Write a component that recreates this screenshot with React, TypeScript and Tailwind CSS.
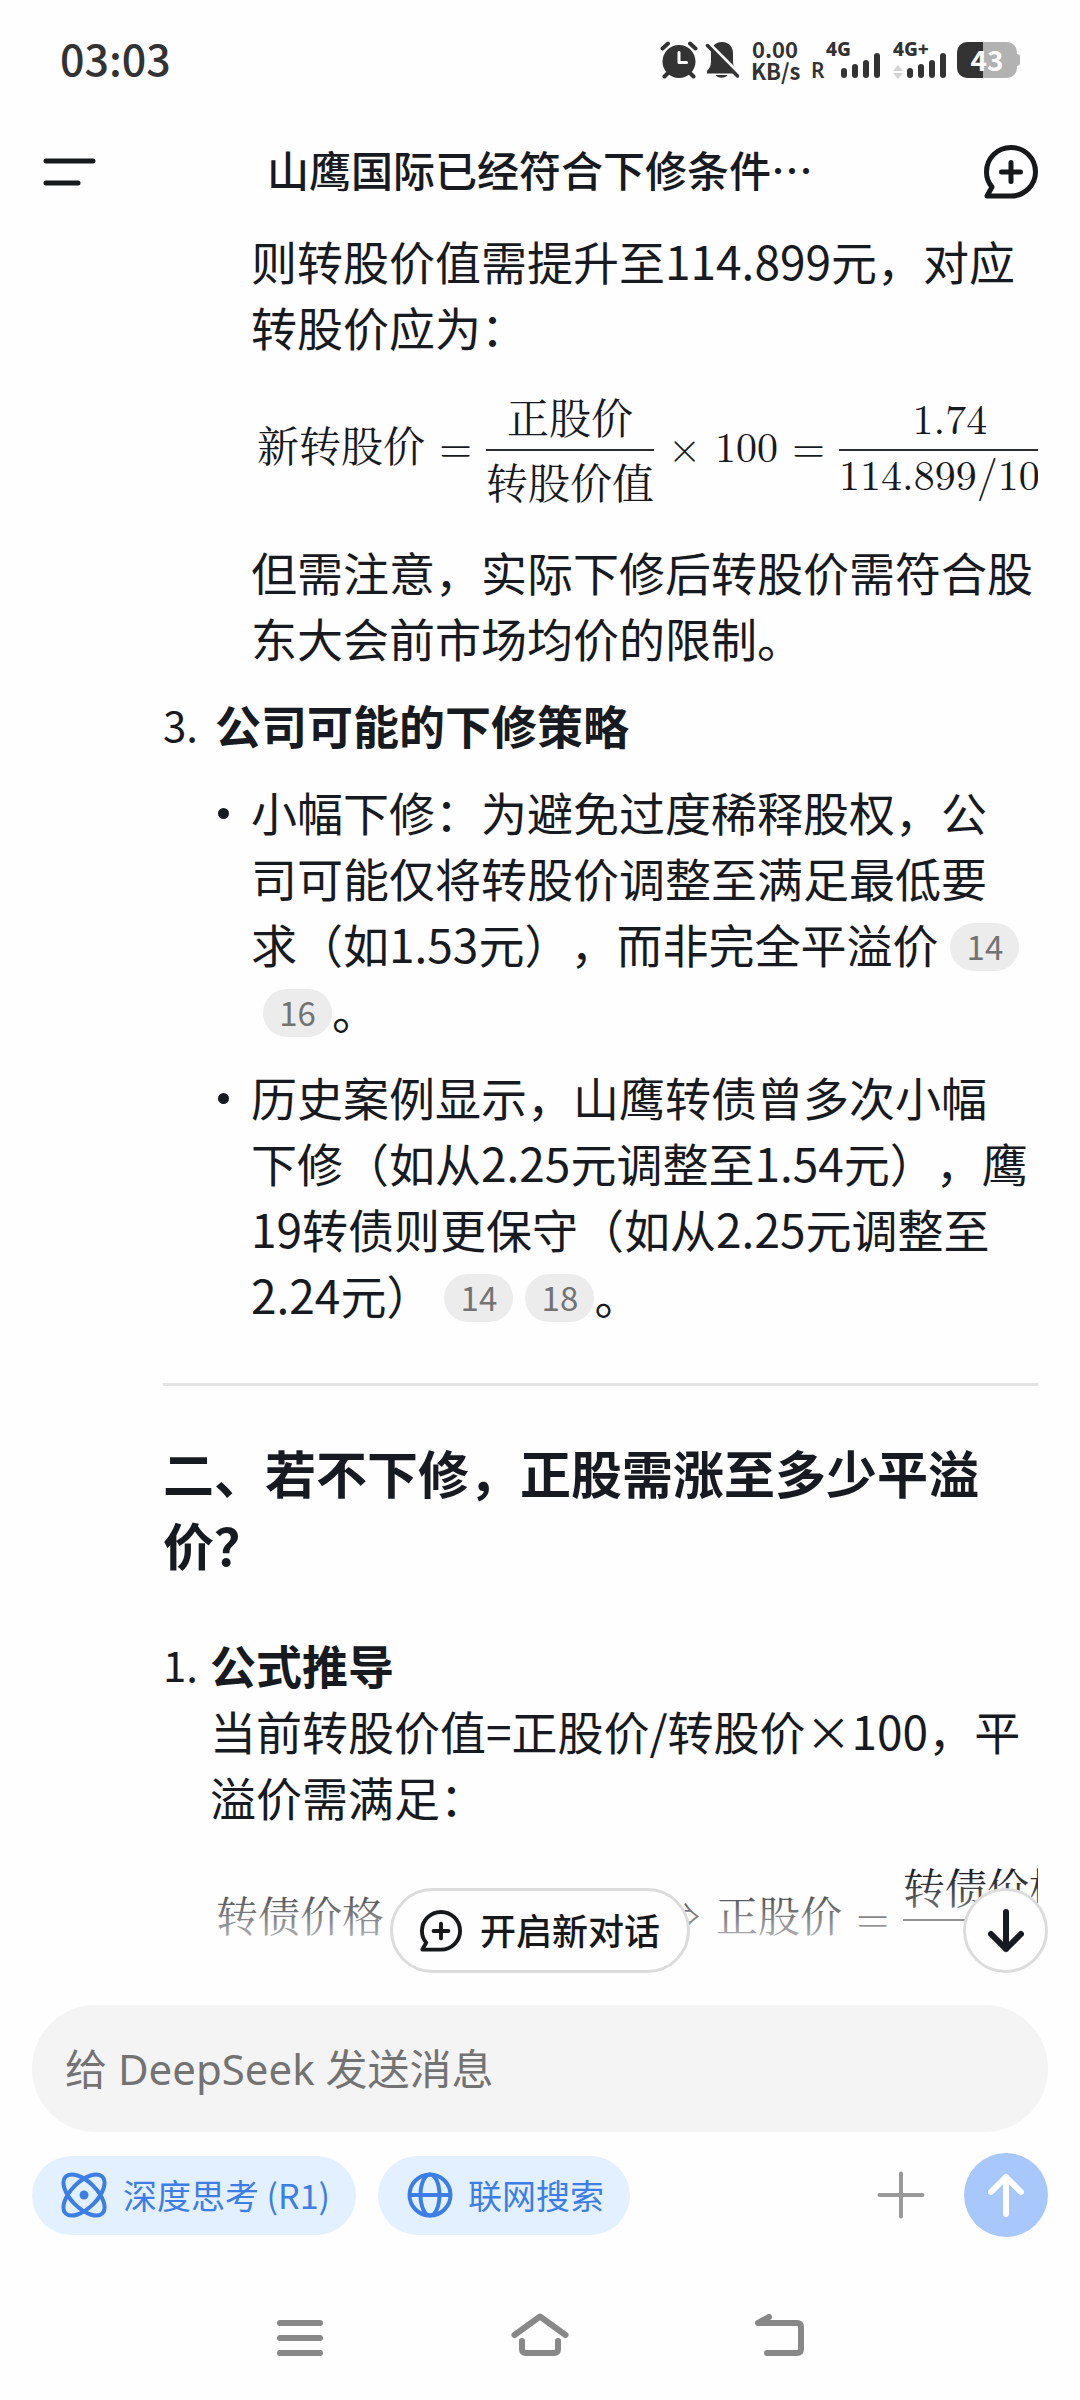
import React, { type ReactNode } from "react";

function ChatPlusIcon({ className, stroke }: { className: string; stroke: number }) {
  return (
    <svg viewBox="0 0 54 54" className={className} fill="none" stroke="currentColor" strokeWidth={stroke} strokeLinecap="round" strokeLinejoin="round" aria-hidden="true">
      <path d="M27 51H3L8 42C4.500 38 2.500 33 2.500 27C2.500 13 13.500 2.500 27 2.500C40.500 2.500 51.500 13 51.500 27C51.500 40 40.500 51 27 51Z" />
      <path d="M27 17.500V36.500M17.500 27H36.500" />
    </svg>
  );
}

function Signal({ label, roaming }: { label: string; roaming: boolean }) {
  return (
    <svg viewBox="0 0 70 40" className="h-10 w-[70px] overflow-visible font-['Noto_Sans',sans-serif]" fill="#333">
      <text x={roaming ? 15 : 16} y="16" fontSize="19" fontWeight="800">{label}</text>
      {roaming ? (
        <text x="0" y="38" fontSize="21" fontWeight="600">R</text>
      ) : (
        <path d="M16 31L21 25L26 31ZM16 33L21 39L26 33Z" fill="#d4d4d4" />
      )}
      <rect x="30" y="28" width="6" height="10" rx="3" />
      <rect x="41" y="24" width="6" height="14" rx="3" />
      <rect x="52" y="20" width="6" height="18" rx="3" />
      <rect x="63" y="13" width="6" height="25" rx="3" />
    </svg>
  );
}

function StatusBar() {
  return (
    <div className="flex h-[120px] items-center justify-between pr-[60px] pl-[60px] text-[#333]">
      <time className="pb-1.5 text-[43px] leading-none font-medium">03:03</time>
      <div className="flex items-center">
        <svg viewBox="0 0 38 38" className="mr-[7px] h-[38px] w-[38px]" fill="none" strokeLinecap="round" aria-label="闹钟">
          <circle cx="19" cy="20.500" r="16.500" fill="#333" />
          <path d="M2.500 7.500L8 2.500M35.500 7.500L30 2.500M4.500 35.500L8 32M33.500 35.500L30 32" stroke="#333" strokeWidth="4" />
          <path d="M19 11.500V21.500H26.500" stroke="#fff" strokeWidth="3" strokeLinejoin="round" />
        </svg>
        <svg viewBox="0 0 34 38" className="mr-3 h-[38px] w-[34px]" aria-label="静音">
          <path d="M17 1C24.500 1 28 6.500 28 12V21C28 25 30 28 32 30V32.500H2V30C4 28 6 25 6 21V12C6 6.500 9.500 1 17 1Z" fill="#333" />
          <path d="M10.500 34H22.500C20.500 37.500 12.500 37.500 10.500 34Z" fill="#333" />
          <path d="M3.500 2L35 33.500" stroke="#fff" strokeWidth="3.500" />
          <path d="M2.500 4.500L32.500 35" stroke="#333" strokeWidth="3.500" strokeLinecap="round" />
        </svg>
        <div className="mr-[12px] w-12 pb-0.5 text-center text-[22px] leading-[22px] font-bold">
          <div>0.00</div>
          <div>KB/s</div>
        </div>
        <Signal label="4G" roaming />
        <div className="-ml-1">
          <Signal label="4G+" roaming={false} />
        </div>
        <div className="ml-[10px] flex items-center">
          <div className="flex h-9 w-[60px] items-center justify-center rounded-[10px] bg-linear-to-r from-[#333] from-43% to-[#b2b2b2] to-43% pb-0.5 text-[28px] leading-none font-bold text-white">43</div>
          <div className="h-3 w-[3px] rounded-r-sm bg-[#b2b2b2]" />
        </div>
      </div>
    </div>
  );
}

function Header() {
  return (
    <header className="grid h-[103px] grid-cols-[53px_1fr_53px] items-center px-[43px]">
      <button type="button" aria-label="菜单">
        <svg viewBox="0 0 53 30" className="h-[30px] w-[53px]" stroke="#17181a" strokeWidth="5" strokeLinecap="round">
          <path d="M3 4H50M3 26H35" />
        </svg>
      </button>
      <h1 className="pb-1.5 text-center text-[42px] leading-[60px] font-medium">山鹰国际已经符合下修条件⋯</h1>
      <button type="button" aria-label="新对话" className="text-[#17181a]">
        <ChatPlusIcon className="h-[54px] w-[54px]" stroke={5} />
      </button>
    </header>
  );
}

function Cite({ n }: { n: number }) {
  return (
    <a href="#cite" className="ml-3 inline-block h-12 w-[69px] rounded-full bg-[#ececec] text-center align-[3px] text-[33px] leading-[46px] text-[#737373]">
      {n}
    </a>
  );
}

function Frac({ top, bottom }: { top: string; bottom: ReactNode }) {
  return (
    <span className="flex shrink-0 flex-col text-center">
      <span className="h-[62px] leading-[60px]">{top}</span>
      <span className="h-0.5 bg-[#2b2d33]" />
      <span className="h-[63px] leading-[62px]">{bottom}</span>
    </span>
  );
}

function Formula({ children }: { children: ReactNode }) {
  return (
    <div className="mt-7 mb-6 flex items-center overflow-hidden pl-[6px] font-['Latin_Modern_Roman','CMU_Serif','KaTeX_Main','STIXGeneral','Noto_Serif_CJK_SC',serif] text-[42px] whitespace-nowrap">
      {children}
    </div>
  );
}

function Sym({ children }: { children: ReactNode }) {
  return <span className="shrink-0 pb-3 leading-[60px]">{children}</span>;
}

function Op({ children }: { children: ReactNode }) {
  return <span className="w-[61px] shrink-0 pb-3 text-center leading-[60px]">{children}</span>;
}

function Bullet({ children }: { children: ReactNode }) {
  return (
    <li className="flex">
      <span className="mt-[30px] mr-[22px] ml-[3px] h-[11px] w-[11px] shrink-0 rounded-full bg-[#171a20]" />
      <div className="whitespace-nowrap">{children}</div>
    </li>
  );
}

function Answer() {
  return (
    <article className="pr-[42px] pl-[163px] text-[46px] leading-[66px] [text-spacing-trim:space-all]">
      <div className="pt-1 pl-[88px]">
        <p>则转股价值需提升至114.899元，对应<br />转股价应为：</p>
        <Formula>
          <Sym>新转股价</Sym>
          <Op>=</Op>
          <Frac top="正股价" bottom="转股价值" />
          <Op>×</Op>
          <Sym>100</Sym>
          <Op>=</Op>
          <Frac top="1.74" bottom={<span className="block leading-[44px]">114.899/100</span>} />
        </Formula>
        <p className="whitespace-nowrap">但需注意，实际下修后转股价需符合股<br />东大会前市场均价的限制。</p>
      </div>

      <div className="mt-[21px] flex">
        <span className="w-[52px] shrink-0 text-[42px]">3.</span>
        <div>
          <strong className="font-bold">公司可能的下修策略</strong>
          <ul className="mt-[21px] flex flex-col gap-[21px]">
            <Bullet>
              小幅下修：为避免过度稀释股权，公<br />
              司可能仅将转股价调整至满足最低要<br />
              求（如1.53元），而非完全平溢价<Cite n={14} /><br />
              <Cite n={16} />。
            </Bullet>
            <Bullet>
              历史案例显示，山鹰转债曾多次小幅<br />
              下修（如从2.25元调整至1.54元），鹰<br />
              19转债则更保守（如从2.25元调整至<br />
              2.24元）<Cite n={14} /><Cite n={18} />。
            </Bullet>
          </ul>
        </div>
      </div>

      <hr className="mt-14 mb-[50px] border-t-[3px] border-[#e4e4e4]" />

      <h2 className="text-[51px] leading-[72px] font-bold">二、若不下修，正股需涨至多少平溢<br />价？</h2>

      <div className="mt-[51px] flex">
        <span className="w-[47px] shrink-0 text-[42px]">1.</span>
        <div className="min-w-0 flex-1">
          <strong className="font-bold">公式推导</strong>
          <p className="whitespace-nowrap">当前转股价值=正股价/转股价×100，平<br />溢价需满足：</p>
          <div className="-mb-6">
            <Formula>
              <Sym>转债价格</Sym>
              <Op>=</Op>
              <Sym>转股价值</Sym>
              <span className="w-[103px] shrink-0 pr-4 pb-3 text-right leading-[60px]">⇒</span>
              <Sym>正股价</Sym>
              <Op>=</Op>
              <Frac top="转债价格 × 转股价" bottom="100" />
            </Formula>
          </div>
        </div>
      </div>
    </article>
  );
}

function Composer() {
  return (
    <footer className="px-8 pt-5">
      <input
        type="text"
        aria-label="消息"
        placeholder="给 DeepSeek 发送消息"
        className="h-[127px] w-full rounded-full bg-[#f4f4f4] px-[33px] font-['Noto_Sans','Noto_Sans_CJK_SC',sans-serif] text-[42px] outline-none placeholder:text-[#737373]"
      />
      <div className="mt-[21px] flex items-center">
        <button type="button" className="flex h-[79px] items-center rounded-full bg-[#e3f0ff] pr-[26px] pl-[29px] text-[34px] leading-none text-[#3d7ee6]">
          <svg viewBox="0 0 46 46" className="mr-4 h-[46px] w-[46px]" fill="none" stroke="currentColor" strokeWidth="4" aria-hidden="true">
            <ellipse cx="23" cy="23" rx="26" ry="13" transform="rotate(45 23 23)" />
            <ellipse cx="23" cy="23" rx="26" ry="13" transform="rotate(-45 23 23)" />
            <circle cx="23" cy="23" r="4.500" fill="currentColor" stroke="none" />
          </svg>
          深度思考 (R1)
        </button>
        <button type="button" className="ml-[22px] flex h-[79px] items-center rounded-full bg-[#e3f0ff] pr-[26px] pl-[29px] text-[34px] leading-none text-[#3d7ee6]">
          <svg viewBox="0 0 46 46" className="mr-[15px] h-[46px] w-[46px]" fill="none" stroke="currentColor" strokeWidth="4" aria-hidden="true">
            <circle cx="23" cy="23" r="20.500" />
            <ellipse cx="23" cy="23" rx="9.500" ry="20.500" />
            <path d="M2.500 23H43.500" />
          </svg>
          联网搜索
        </button>
        <button type="button" aria-label="添加" className="ml-auto">
          <svg viewBox="0 0 48 48" className="h-12 w-12" stroke="#999" strokeWidth="4" strokeLinecap="round">
            <path d="M24 2.500V45.500M2.500 24H45.500" />
          </svg>
        </button>
        <button type="button" aria-label="发送" className="ml-[39px] flex h-[84px] w-[84px] items-center justify-center rounded-full bg-[#a8c7fa]">
          <svg viewBox="0 0 36 44" className="h-11 w-9" fill="none" stroke="#fff" strokeWidth="6" strokeLinecap="round" strokeLinejoin="round">
            <path d="M18 41V4M3 19L18 4L33 19" />
          </svg>
        </button>
      </div>
    </footer>
  );
}

function SystemNav() {
  return (
    <nav className="flex h-[163px] items-center justify-center gap-[183px] pt-8">
      <button type="button" aria-label="最近任务">
        <svg viewBox="0 0 58 44" className="h-11 w-[58px]" stroke="#888" strokeWidth="6" strokeLinecap="round">
          <path d="M10 10H50M10 25H50M10 40H50" />
        </svg>
      </button>
      <button type="button" aria-label="主屏幕">
        <svg viewBox="0 0 58 44" className="h-11 w-[58px]" fill="none" stroke="#888" strokeWidth="6" strokeLinecap="round" strokeLinejoin="round">
          <path d="M3.500 22L29 3.500L54.500 22M11 28V36Q11 40 15 40H43Q47 40 47 36V28" />
        </svg>
      </button>
      <button type="button" aria-label="返回">
        <svg viewBox="0 0 58 44" className="h-11 w-[58px]" fill="none" stroke="#888" strokeWidth="6" strokeLinecap="round" strokeLinejoin="round">
          <path d="M17 4L6 10H45Q49 10 49 14V36Q49 40 45 40H15" />
          <path d="M6 10L17 4L15 10Z" fill="#888" stroke="none" />
        </svg>
      </button>
    </nav>
  );
}

export default function App() {
  return (
    <div className="flex min-h-screen flex-col overflow-hidden bg-[#fefefe] font-['Noto_Sans_CJK_SC',sans-serif] text-[#171a20]">
      <StatusBar />
      <Header />
      <main className="relative flex-1">
        <Answer />
        <div className="pointer-events-none absolute inset-x-0 bottom-0 h-[115px] bg-linear-to-b from-[#fefefe]/0 to-[#fefefe] to-90%" />
        <button type="button" className="absolute bottom-3 left-1/2 flex h-[85px] -translate-x-1/2 items-center rounded-full border-[3px] border-[#dcdcdc] bg-[#fefefe] px-[27px] text-[36px] leading-none font-medium whitespace-nowrap text-[#17181a]">
          <ChatPlusIcon className="mr-[18px] h-[42px] w-[42px]" stroke={5} />
          <span className="pb-1">开启新对话</span>
        </button>
        <button type="button" aria-label="滚动到底部" className="absolute right-8 bottom-3 flex h-[85px] w-[85px] items-center justify-center rounded-full border-[3px] border-[#dcdcdc] bg-[#fefefe]">
          <svg viewBox="0 0 36 44" className="h-11 w-9" fill="none" stroke="#171a20" strokeWidth="6" strokeLinecap="round" strokeLinejoin="round">
            <path d="M18 3V40M3 25L18 40L33 25" />
          </svg>
        </button>
      </main>
      <Composer />
      <SystemNav />
    </div>
  );
}
